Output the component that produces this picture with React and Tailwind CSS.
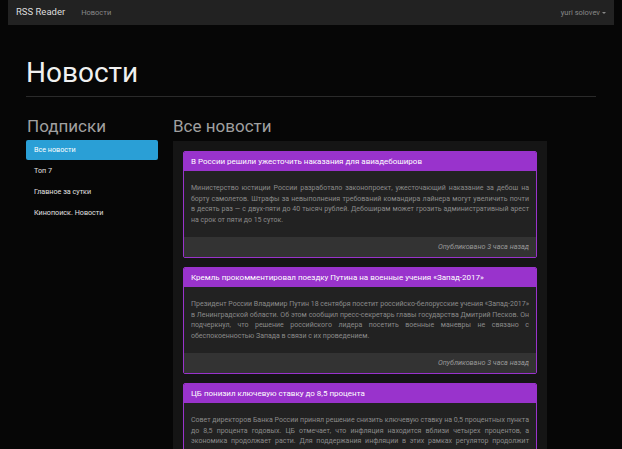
import React from "react";

const items = ["Все новости", "Топ 7", "Главное за сутки", "Кинопоиск. Новости"];

const news = [
  {
    title: "В России решили ужесточить наказания для авиадебоширов",
    body: "Министерство юстиции России разработало законопроект, ужесточающий наказание за дебош на борту самолетов. Штрафы за невыполнения требований командира лайнера могут увеличить почти в десять раз — с двух-пяти до 40 тысяч рублей. Дебоширам может грозить административный арест на срок от пяти до 15 суток.",
  },
  {
    title: "Кремль прокомментировал поездку Путина на военные учения «Запад-2017»",
    body: "Президент России Владимир Путин 18 сентября посетит российско-белорусские учения «Запад-2017» в Ленинградской области. Об этом сообщил пресс-секретарь главы государства Дмитрий Песков. Он подчеркнул, что решение российского лидера посетить военные маневры не связано с обеспокоенностью Запада в связи с их проведением.",
  },
  {
    title: "ЦБ понизил ключевую ставку до 8,5 процента",
    body: "Совет директоров Банка России принял решение снизить ключевую ставку на 0,5 процентных пункта до 8,5 процента годовых. ЦБ отмечает, что инфляция находится вблизи четырех процентов, а экономика продолжает расти. Для поддержания инфляции в этих рамках регулятор продолжит проведение умеренно жесткой денежно-кредитной политики.",
  },
];

export default function App() {
  return (
    <div className="bg-[#060606] font-['Roboto',sans-serif] overflow-hidden h-[449px]">
      <nav className="mx-[8px] h-[25px] bg-[#222] flex items-center px-[8px]">
        <span className="text-[9.5px] text-[#ddd]">RSS Reader</span>
        <span className="ml-[16px] text-[7.5px] text-[#888]">Новости</span>
        <span className="ml-auto text-[7.5px] text-[#888] flex items-center">
          yuri solovev
          <span className="ml-[2px] w-0 h-0 border-l-[2.5px] border-r-[2.5px] border-t-[2.5px] border-l-transparent border-r-transparent border-t-[#888]"></span>
        </span>
      </nav>
      <div className="pl-[26px] pr-[26px]">
        <h1 className="mt-[31px] text-[28px] leading-[34px] text-[#f0f0f0] font-normal">Новости</h1>
        <div className="mt-[6px] h-px bg-[#2a2a2a]"></div>
        <div className="flex gap-[15px] mt-[17px]">
          <div className="w-[132px] shrink-0">
            <h2 className="text-[17px] leading-[24px] text-[#a0a0a0] pl-px">Подписки</h2>
            <ul className="mt-[2px] flex flex-col gap-px">
              {items.map((it, i) => (
                <li
                  key={it}
                  className={
                    "h-[20px] flex items-center px-[8px] text-[7.2px] rounded-[2px] " +
                    (i === 0 ? "bg-[#2a9fd6] text-white" : "text-[#e0e0e0]")
                  }
                >
                  {it}
                </li>
              ))}
            </ul>
          </div>
          <div className="w-[374px] shrink-0">
            <h2 className="text-[17px] leading-[24px] text-[#a0a0a0]">Все новости</h2>
            <div className="mt-[3px] bg-[#151515] px-[10px] pt-[10px] flex flex-col gap-[9px]">
              {news.map((n) => (
                <div key={n.title} className="border border-[#9933cc] rounded-[2px] overflow-hidden">
                  <div className="bg-[#9933cc] h-[19px] flex items-center px-[7px] text-[8px] text-white">
                    {n.title}
                  </div>
                  <div className="bg-[#222] px-[7px] py-[12px] text-[7px] leading-[10.5px] text-[#8a8a8a] text-justify">
                    {n.body}
                  </div>
                  <div className="bg-[#333] h-[20px] flex items-center justify-end px-[7px] text-[7.2px] italic text-[#999]">
                    Опубликовано 3 часа назад
                  </div>
                </div>
              ))}
            </div>
          </div>
        </div>
      </div>
    </div>
  );
}
